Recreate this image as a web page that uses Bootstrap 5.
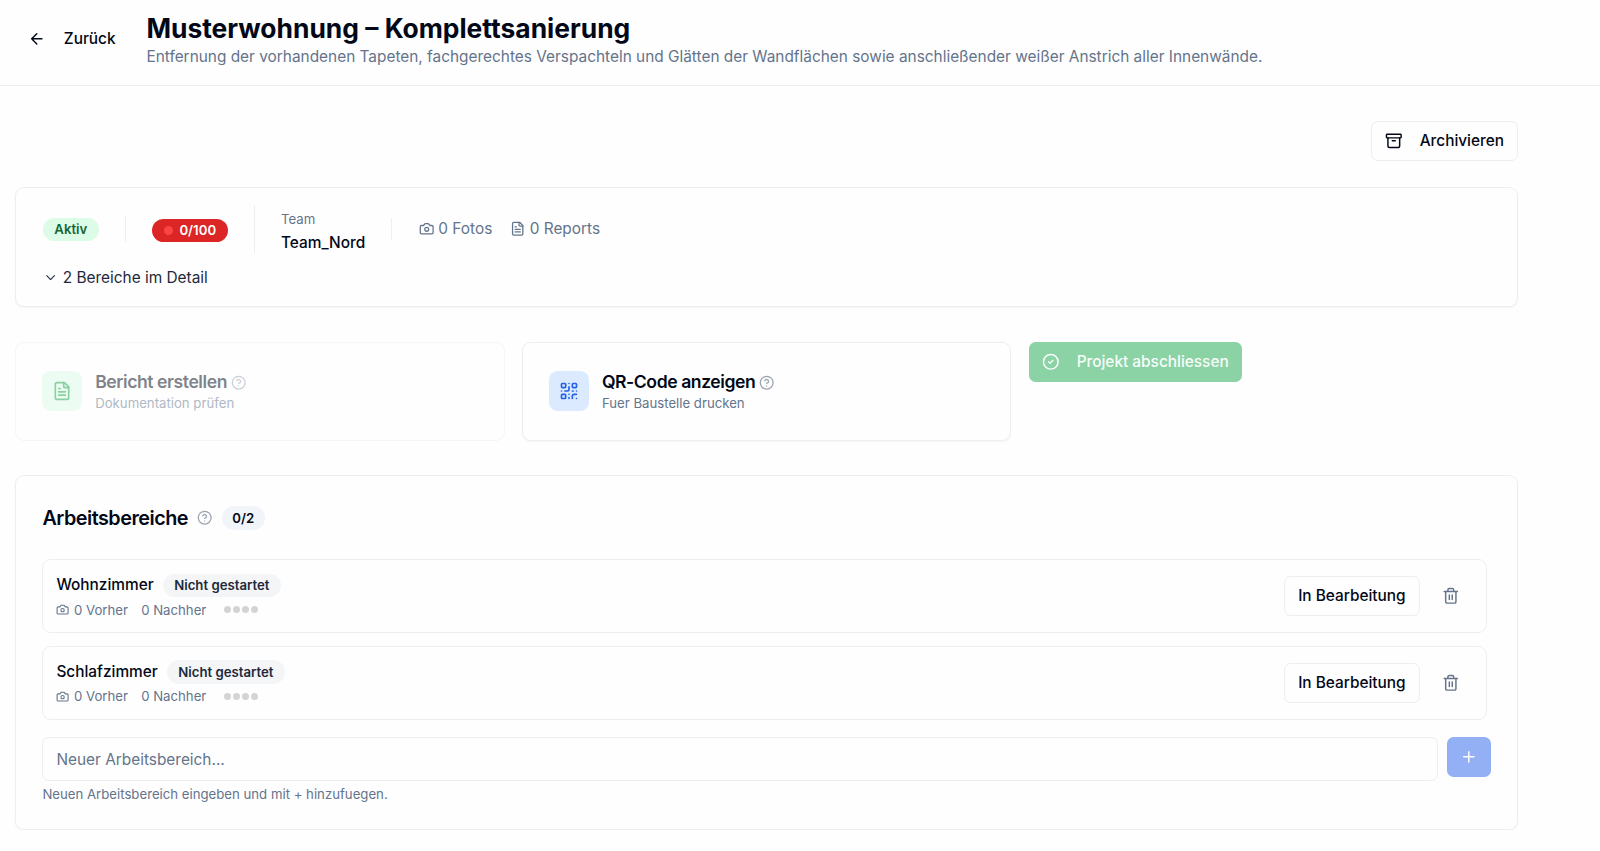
<!DOCTYPE html>
<html lang="de">
<head>
<meta charset="utf-8">
<meta name="viewport" content="width=device-width, initial-scale=1">
<title>Musterwohnung – Komplettsanierung</title>
<link href="https://cdn.jsdelivr.net/npm/bootstrap@5.3.0/dist/css/bootstrap.min.css" rel="stylesheet">
<style>
:root{--ink:#020817;--soft:#64748b;--line:#eceff2}
body{font-family:Inter,"Liberation Sans",sans-serif;font-size:15.4px;line-height:22px;color:var(--ink);background:#fefefe;overflow:hidden}
svg{fill:none;stroke:currentColor;stroke-width:2;stroke-linecap:round;stroke-linejoin:round;flex:none;display:block}
.i13{width:13.2px;height:13.2px}.i15{width:15.4px;height:15.4px}.i18{width:17.6px;height:17.6px}.i20{width:20px;height:20px}
.soft{color:var(--soft)}
.topbar{height:86px;border-bottom:1px solid var(--line);padding-left:28.4px}
.back{font-weight:500;gap:17.8px;width:118px;margin-top:-8px}
h1{font-size:26.4px;line-height:34px;font-weight:700;margin:11px 0 1px}
.page{padding:35px 82px 0 15.4px}
.btn{--bs-btn-font-size:15.4px;--bs-btn-line-height:22px;--bs-btn-font-weight:500;--bs-btn-border-radius:6.6px;--bs-btn-color:var(--ink);--bs-btn-border-color:var(--line);height:39.6px;display:inline-flex;align-items:center;padding:0 13.2px;white-space:nowrap}
.btn-archive{padding:0 13px 0 12.8px}
.btn-archive span{padding-left:17.4px}
.card{--bs-card-border-color:var(--line);--bs-card-border-radius:8.8px;--bs-card-bg:#fefefe;--bs-body-color:var(--ink);box-shadow:0 1px 2px rgba(0,0,0,.04)}
.status{height:120px;margin-top:26.4px;padding:17px 26.4px 0}
.facts{height:49px}
.pill{display:inline-flex;align-items:center;height:23.4px;border-radius:12px;padding:0 11.5px;font-size:13.2px;font-weight:600;line-height:18px;white-space:nowrap}
.pill-ok{background:#dcfce7;color:#166534}
.pill-bad{background:#dc2626;color:#fff;margin-top:2px}
.pill-bad i{width:9px;height:9px;border-radius:50%;background:#fb4444;margin-right:6.8px}
.pill-count{background:#f1f5f9;padding:0 10.6px}
.sep{width:1px;background:var(--line);margin:0 26.2px}
.small-t{font-size:13.2px;line-height:18px}
.fw5{font-weight:500}
.team{padding-top:5px}.team .fw5{margin-top:4px}
.counts{margin-top:-1px}
.g4{margin-right:4.4px}
.ml18{margin-left:17.6px}
.detail{margin-top:13px;padding-left:.8px;color:#1e293b}
.detail svg{margin-right:6px}
.actions{margin-top:35px;display:grid;grid-template-columns:repeat(3,1fr);gap:17.6px}
.action{height:98.6px;padding:0 26px}
.action .ttl{margin-top:-1px}
.tile{width:39.6px;height:39.6px;border-radius:8.8px;margin:-1px 13.2px 0 0}
.tile-green{background:#dcfce7;color:#16a34a}
.tile-blue{background:#dbeafe;color:#2563eb}
.ttl{font-size:17.6px;line-height:24px;font-weight:600;letter-spacing:-.44px}
.off{opacity:.5}
.off.card{box-shadow:none}
.help{color:#9ca3af}
.btn-done,.btn-done:disabled{background:#8bd2a5;color:#f7fdf9;border:0;opacity:1;padding:0 13.2px;font-weight:500}
.btn-done span{padding-left:17px}
.areas{height:355px;margin-top:34.4px;padding:0 26px}
h2{font-size:19.8px;line-height:28px;font-weight:600;margin:0;letter-spacing:-.5px}
.area-head{margin:28px 0 27.4px;height:28px}
.area-head .help{margin:0 9.200px 0 9px}
.area{height:73.6px;border:1px solid var(--line);border-radius:8.8px;padding:0 13px;margin:0 4.2px 13px 0}
.area .btn{margin-right:22px}
.area .name-row{height:24px;margin-top:0}
.area .pill{margin-left:9px;background:#f3f5f7;color:#1e293b}
.trash{margin-right:13.4px;color:var(--soft)}
.meta{margin-top:3.4px}
.meta .after{margin:0 18px 0 13.2px}
.dots{gap:1.8px}.dots i{width:7px;height:7px;border-radius:50%;background:#d4d4d6}
.new-row{margin-top:4.4px;gap:8.8px}
.form-control{height:44px;border-color:var(--line);border-radius:6.6px;font-size:15.4px;padding:1px 13px 0;background:#fefefe}
.form-control::placeholder{color:var(--soft)}
.btn-add,.btn-add:disabled{width:44px;background:#94b0f4;color:#fff;border:0;opacity:1;justify-content:center;flex:none}
.hint{margin-top:4px}
</style>
</head>
<body>
<svg class="d-none" xmlns="http://www.w3.org/2000/svg">
<symbol id="camera" viewBox="0 0 24 24"><path d="M14.5 4h-5L7 7H4a2 2 0 0 0-2 2v9a2 2 0 0 0 2 2h16a2 2 0 0 0 2-2V9a2 2 0 0 0-2-2h-3l-2.500-3z"/><circle cx="12" cy="13" r="3"/></symbol>
<symbol id="file" viewBox="0 0 24 24"><path d="M15 2H6a2 2 0 0 0-2 2v16a2 2 0 0 0 2 2h12a2 2 0 0 0 2-2V7Z"/><path d="M14 2v4a2 2 0 0 0 2 2h4M10 9H8M16 13H8M16 17H8"/></symbol>
<symbol id="help" viewBox="0 0 24 24"><circle cx="12" cy="12" r="10"/><path d="M9.090 9a3 3 0 0 1 5.830 1c0 2-3 3-3 3M12 17h.01"/></symbol>
<symbol id="trash" viewBox="0 0 24 24"><path d="M3 6h18M19 6v14a2 2 0 0 1-2 2H7a2 2 0 0 1-2-2V6M8 6V4a2 2 0 0 1 2-2h4a2 2 0 0 1 2 2v2M10 11v6M14 11v6"/></symbol>
</svg>

<header class="topbar d-flex">
  <div class="back d-flex align-items-center"><svg class="i18" viewBox="0 0 24 24"><path d="m12 19-7-7 7-7M19 12H5"/></svg><span>Zurück</span></div>
  <div><h1>Musterwohnung – Komplettsanierung</h1><div class="soft">Entfernung der vorhandenen Tapeten, fachgerechtes Verspachteln und Glätten der Wandflächen sowie anschließender weißer Anstrich aller Innenwände.</div></div>
</header>

<main class="page">
  <div class="d-flex justify-content-end"><button class="btn btn-archive"><svg class="i18" viewBox="0 0 24 24"><rect width="20" height="5" x="2" y="3" rx="1"/><path d="M4 8v11a2 2 0 0 0 2 2h12a2 2 0 0 0 2-2V8M10 12h4"/></svg><span>Archivieren</span></button></div>

  <section class="card status">
    <div class="facts d-flex align-items-center">
      <span class="pill pill-ok">Aktiv</span>
      <span class="sep" style="height:26px"></span>
      <span class="pill pill-bad"><i></i>0/100</span>
      <span class="sep" style="height:48px"></span>
      <div class="team"><div class="soft small-t">Team</div><div class="fw5">Team_Nord</div></div>
      <span class="sep" style="height:22px"></span>
      <div class="counts d-flex align-items-center soft"><svg class="i15 g4"><use href="#camera"/></svg><span>0 Fotos</span><svg class="i15 ml18 g4"><use href="#file"/></svg><span>0 Reports</span></div>
    </div>
    <div class="d-flex align-items-center detail"><svg class="i13" viewBox="0 0 24 24"><path d="m5 8.500 7 7 7-7"/></svg><span>2 Bereiche im Detail</span></div>
  </section>

  <section class="actions">
    <div class="card action off flex-row align-items-center">
      <div class="tile tile-green d-flex align-items-center justify-content-center"><svg class="i20"><use href="#file"/></svg></div>
      <div><div class="d-flex align-items-center"><span class="ttl">Bericht erstellen</span><svg class="i15 help ms-1"><use href="#help"/></svg></div><div class="soft small-t">Dokumentation prüfen</div></div>
    </div>
    <div class="card action flex-row align-items-center">
      <div class="tile tile-blue d-flex align-items-center justify-content-center"><svg class="i20" viewBox="0 0 24 24"><rect width="5" height="5" x="3" y="3" rx="1"/><rect width="5" height="5" x="16" y="3" rx="1"/><rect width="5" height="5" x="3" y="16" rx="1"/><path d="M21 16h-3a2 2 0 0 0-2 2v3M21 21v.01M12 7v3a2 2 0 0 1-2 2H7M3 12h.01M12 3h.01M12 16v.01M16 12h1M21 12v.01M12 21v-1"/></svg></div>
      <div><div class="d-flex align-items-center"><span class="ttl">QR-Code anzeigen</span><svg class="i15 help ms-1"><use href="#help"/></svg></div><div class="soft small-t">Fuer Baustelle drucken</div></div>
    </div>
    <div><button class="btn btn-done" disabled><svg class="i18" viewBox="0 0 24 24"><circle cx="12" cy="12" r="10"/><path d="m9 12 2 2 4-4"/></svg><span>Projekt abschliessen</span></button></div>
  </section>

  <section class="card areas">
    <div class="area-head d-flex align-items-center"><h2>Arbeitsbereiche</h2><svg class="i15 help"><use href="#help"/></svg><span class="pill pill-count">0/2</span></div>
    <div class="area d-flex align-items-center">
      <div class="me-auto">
        <div class="name-row d-flex align-items-center"><span class="fw5">Wohnzimmer</span><span class="pill">Nicht gestartet</span></div>
        <div class="meta d-flex align-items-center soft small-t"><svg class="i13 g4"><use href="#camera"/></svg><span>0 Vorher</span><span class="after">0 Nachher</span><span class="dots d-flex"><i></i><i></i><i></i><i></i></span></div>
      </div>
      <button class="btn">In Bearbeitung</button>
      <svg class="i18 trash"><use href="#trash"/></svg>
    </div>
    <div class="area d-flex align-items-center">
      <div class="me-auto">
        <div class="name-row d-flex align-items-center"><span class="fw5">Schlafzimmer</span><span class="pill">Nicht gestartet</span></div>
        <div class="meta d-flex align-items-center soft small-t"><svg class="i13 g4"><use href="#camera"/></svg><span>0 Vorher</span><span class="after">0 Nachher</span><span class="dots d-flex"><i></i><i></i><i></i><i></i></span></div>
      </div>
      <button class="btn">In Bearbeitung</button>
      <svg class="i18 trash"><use href="#trash"/></svg>
    </div>
    <div class="new-row d-flex align-items-start">
      <input class="form-control" type="text" placeholder="Neuer Arbeitsbereich...">
      <button class="btn btn-add" disabled><svg class="i18" viewBox="0 0 24 24"><path d="M5 12h14M12 5v14"/></svg></button>
    </div>
    <div class="hint small-t soft">Neuen Arbeitsbereich eingeben und mit + hinzufuegen.</div>
  </section>
</main>
<script src="https://cdn.jsdelivr.net/npm/bootstrap@5.3.0/dist/js/bootstrap.bundle.min.js"></script>
</body>
</html>
